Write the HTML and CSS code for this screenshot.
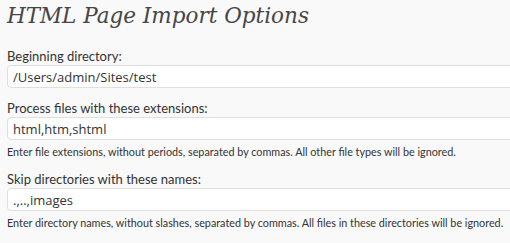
FILE: index.html
```html
<!DOCTYPE html>
<html lang="en">
<head>
    <meta charset="UTF-8">
    <title>HTML Page Import Options</title>
    <link rel="stylesheet" href="styles.css">
</head>
<body>
    <h2 class="titulo">HTML Page Import Options</h2>

    <div class="campo">
        <label for="root">Beginning directory:</label>
        <input type="text" id="root" class="caixa" value="/Users/admin/Sites/test">
    </div>

    <div class="campo">
        <label for="ext">Process files with these extensions:</label>
        <input type="text" id="ext" class="caixa" value="html,htm,shtml">
        <p class="dica">Enter file extensions, without periods, separated by commas. All other file types will be ignored.</p>
    </div>

    <div class="campo">
        <label for="skip">Skip directories with these names:</label>
        <input type="text" id="skip" class="caixa" value=".,..,images">
        <p class="dica">Enter directory names, without slashes, separated by commas. All files in these directories will be ignored.</p>
    </div>
</body>
</html>
```

FILE: styles.css
```css
body {
    margin: 0;
    padding: 0 0 0 7px;
    background-color: #f9f9f9;
    font-family: Lato, "Open Sans", sans-serif;
    color: #333;
    overflow: hidden;
}
.titulo {
    font-family: "DejaVu Serif", Georgia, serif;
    font-style: italic;
    font-weight: normal;
    font-size: 21.5px;
    color: #464646;
    margin: 0;
    padding: 1px 0 0 0;
    line-height: 30px;
    height: 48px;
    box-sizing: border-box;
    white-space: nowrap;
}
.campo {
    margin-bottom: 12px;
}
.campo label {
    display: block;
    font-size: 13px;
    line-height: 16px;
    margin-bottom: 1px;
}
.caixa {
    box-sizing: border-box;
    width: 520px;
    height: 23px;
    border: 1px solid #dfdfdf;
    border-radius: 4px;
    background-color: #fff;
    padding: 0 5px;
    font-family: "Open Sans", sans-serif;
    font-size: 13px;
    color: #333;
    margin: 0;
}
.dica {
    font-size: 10.8px;
    line-height: 14px;
    margin: 5px 0 0 0;
    color: #333;
    white-space: nowrap;
}
```
